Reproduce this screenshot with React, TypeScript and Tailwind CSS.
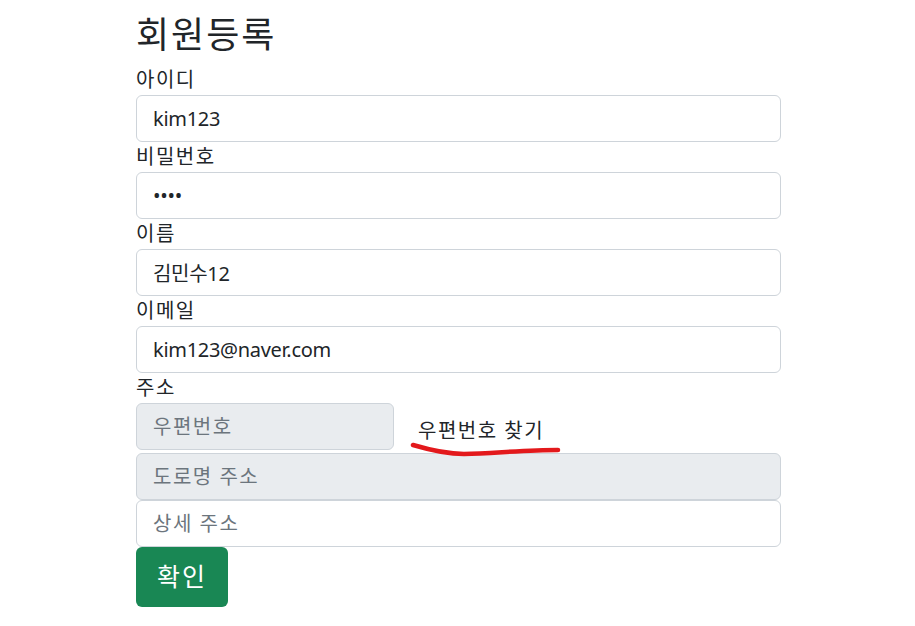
export default function App() {
  const font = { fontFamily: '"Noto Sans", "Noto Sans CJK KR", sans-serif' };
  return (
    <div className="min-h-[626px] bg-white pl-[2px] text-[#212529]" style={font}>
      <div className="mx-auto w-[645px]">
        <h1 className="flex h-[65px] items-center pt-[4px] text-[36px] font-normal leading-none tracking-[2px]">회원등록</h1>
        <Field label="아이디" value="kim123" />
        <Field label="비밀번호" value="••••" />
        <Field label="이름" value="김민수12" />
        <Field label="이메일" value="kim123@naver.com" />
        <div className="h-[30px] text-[20px] leading-[30px] tracking-[1.5px]">주소</div>
        <div className="relative flex items-center">
          <input
            readOnly
            placeholder="우편번호"
            className="h-[47px] w-[258px] rounded-[6px] border border-[#ced4da] bg-[#e9ecef] px-4 text-[20px] tracking-[1.5px] outline-none placeholder:text-[#6c757d]"
          />
          <button className="ml-[24px] mt-[8px] text-[20px] leading-[30px] tracking-[1.5px]">우편번호 찾기</button>
          <svg className="absolute left-[270px] top-[34px]" width="160" height="22" viewBox="0 0 160 22">
            <path
              d="M7 8 C 24 13, 40 17, 58 17 C 90 16, 120 13, 152 13"
              fill="none"
              stroke="#e3191c"
              strokeWidth="4.5"
              strokeLinecap="round"
            />
          </svg>
        </div>
        <input
          readOnly
          placeholder="도로명 주소"
          className="mt-[3px] block h-[47px] w-full rounded-[6px] border border-[#ced4da] bg-[#e9ecef] px-4 text-[20px] tracking-[1.5px] outline-none placeholder:text-[#6c757d]"
        />
        <input
          placeholder="상세 주소"
          className="block h-[47px] w-full rounded-[6px] border border-[#ced4da] bg-white px-4 text-[20px] tracking-[1.5px] outline-none placeholder:text-[#6c757d]"
        />
        <button className="h-[60px] w-[92px] rounded-[6px] bg-[#198754] text-[25px] tracking-[2px] text-white">확인</button>
      </div>
    </div>
  );
}

function Field({ label, value }: { label: string; value: string }) {
  return (
    <div>
      <div className="h-[30px] text-[20px] leading-[30px] tracking-[1.5px]">{label}</div>
      <input
        defaultValue={value}
        className="block h-[47px] w-full rounded-[6px] border border-[#ced4da] bg-white px-4 text-[20px] tracking-[-0.3px] text-[#212529] outline-none"
      />
    </div>
  );
}
